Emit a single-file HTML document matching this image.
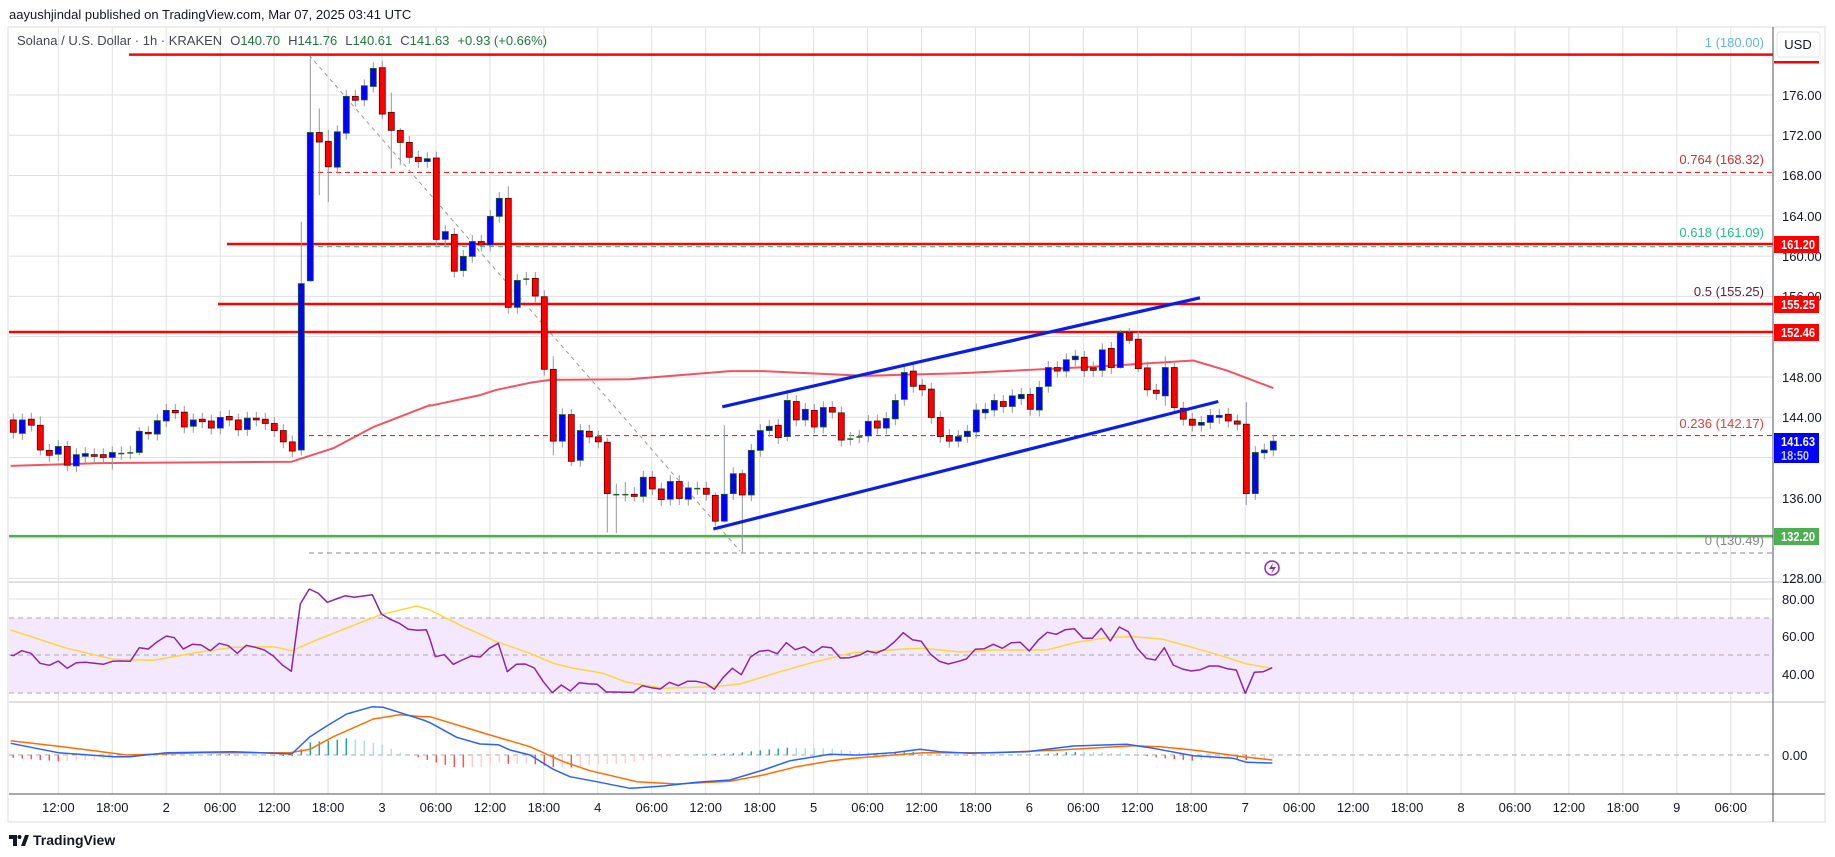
<!DOCTYPE html>
<html><head><meta charset="utf-8">
<style>
html,body{margin:0;padding:0;background:#fff;width:1835px;height:857px;overflow:hidden;font-family:"Liberation Sans",sans-serif;}
svg{position:absolute;left:0;top:0;}
text{font-family:"Liberation Sans",sans-serif;}
</style></head>
<body>
<svg id="s" width="1835" height="857" viewBox="0 0 1835 857" xmlns="http://www.w3.org/2000/svg">
<rect x="8" y="27" width="1817" height="795" fill="#fff" stroke="#e9e9ea" stroke-width="1.5"/>
<g id="grid"></g>
<rect x="9" y="618" width="1764" height="75" fill="#f3e8fd"/>
<g id="bg"></g>
<g id="cand"></g>
<g id="fg"></g>
<text x="9" y="19" font-size="13" fill="#131722">aayushjindal published on TradingView.com, Mar 07, 2025 03:41 UTC</text>
<text x="17" y="45" font-size="13" fill="#434651">Solana / U.S. Dollar · 1h · KRAKEN<tspan dx="8">O</tspan><tspan fill="#1e7b3c">140.70</tspan><tspan dx="8">H</tspan><tspan fill="#1e7b3c">141.76</tspan><tspan dx="8">L</tspan><tspan fill="#1e7b3c">140.61</tspan><tspan dx="8">C</tspan><tspan fill="#1e7b3c">141.63</tspan><tspan dx="8" fill="#1e7b3c">+0.93 (+0.66%)</tspan></text>
<g font-size="13" text-anchor="end">
<text x="1764" y="47" fill="#64b5dc">1 (180.00)</text>
<text x="1764" y="164" fill="#d32f2f">0.764 (168.32)</text>
<text x="1764" y="237" fill="#22c08e">0.618 (161.09)</text>
<text x="1764" y="296" fill="#5b2438">0.5 (155.25)</text>
<text x="1764" y="428" fill="#e0403c">0.236 (142.17)</text>
<text x="1764" y="545" fill="#888">0 (130.49)</text>
</g>
<g font-size="13" fill="#131722">
<text x="1782" y="100">176.00</text><text x="1782" y="140">172.00</text><text x="1782" y="180">168.00</text>
<text x="1782" y="221">164.00</text><text x="1782" y="261">160.00</text><text x="1782" y="301">156.00</text>
<text x="1782" y="382">148.00</text><text x="1782" y="422">144.00</text><text x="1782" y="503">136.00</text>
<text x="1782" y="583">128.00</text>
<text x="1782" y="604">80.00</text><text x="1782" y="641">60.00</text><text x="1782" y="679">40.00</text>
<text x="1782" y="760">0.00</text>
</g>
<rect x="1777" y="32" width="43" height="25" rx="3" fill="#fff" stroke="#e0e3eb"/>
<text x="1798" y="49" font-size="13" fill="#131722" text-anchor="middle">USD</text>
<rect x="1774" y="61" width="45" height="2.5" fill="#f00"/>
<g font-size="12.5" font-weight="bold" fill="#fff">
<rect x="1774" y="236" width="45" height="17" fill="#f00"/><text x="1781" y="249" textLength="34" lengthAdjust="spacingAndGlyphs">161.20</text>
<rect x="1774" y="296" width="45" height="17" fill="#f00"/><text x="1781" y="309" textLength="34" lengthAdjust="spacingAndGlyphs">155.25</text>
<rect x="1774" y="324" width="45" height="17" fill="#f00"/><text x="1781" y="337" textLength="34" lengthAdjust="spacingAndGlyphs">152.46</text>
<rect x="1774" y="433" width="45" height="30" fill="#0000ff"/><text x="1781" y="446" textLength="34" lengthAdjust="spacingAndGlyphs">141.63</text><text x="1781" y="460" fill="#c9c9ff" textLength="28" lengthAdjust="spacingAndGlyphs">18:50</text>
<rect x="1774" y="528" width="45" height="17" fill="#4caf50"/><text x="1781" y="541" textLength="34" lengthAdjust="spacingAndGlyphs">132.20</text>
</g>
<line x1="1773" y1="27" x2="1773" y2="822" stroke="#50535e" stroke-width="1"/>
<line x1="9" y1="794" x2="1825" y2="794" stroke="#50535e" stroke-width="1"/>
<g id="tl" font-size="13" fill="#131722" text-anchor="middle"></g>
<circle cx="1272" cy="568" r="7" fill="none" stroke="#9c27b0" stroke-width="1.5"/>
<path d="M1273 563 L1269 569 L1273 569 L1271 574 L1276 567 L1272 567 Z" fill="#9c27b0"/>
<g transform="translate(9,833)">
<path d="M0 2 H8 V13 H4 V6 H0 Z" fill="#131722"/>
<circle cx="10.5" cy="4" r="2" fill="#131722"/>
<path d="M12 13 L16 2 H20 L16 13 Z" fill="#131722"/>
</g>
<text x="33" y="845" font-size="14" font-weight="bold" fill="#131722">TradingView</text>
</svg>
<script>
var NS="http://www.w3.org/2000/svg";
function el(p,t,a){var e=document.createElementNS(NS,t);for(var k in a)e.setAttribute(k,a[k]);document.getElementById(p).appendChild(e);return e;}
function py(p){return 95+(176-p)*10.07;}
function zy(z){return 27+z/2.825;}
for(var k=0;k<32;k++){var x=58.3+53.95*k;if(x>1772)break;el('grid','line',{x1:x,y1:27,x2:x,y2:794,stroke:'#e0e0e0','stroke-width':1});}
for(var p=128;p<=176;p+=4){el('grid','line',{x1:9,y1:py(p),x2:1773,y2:py(p),stroke:'#e0e0e0'});}
[599,636,674].forEach(function(y){el('grid','line',{x1:9,y1:y,x2:1773,y2:y,stroke:'#e0e0e0'});});
el('grid','line',{x1:9,y1:582,x2:1825,y2:582,stroke:'#e0e0e0','stroke-width':2});
el('grid','line',{x1:9,y1:702,x2:1825,y2:702,stroke:'#e0e0e0','stroke-width':2});
[618,655,693].forEach(function(y){el('bg','line',{x1:9,y1:y,x2:1773,y2:y,stroke:'#aaa','stroke-dasharray':'5,4'});});
el('bg','line',{x1:9,y1:755,x2:1773,y2:755,stroke:'#aaa','stroke-dasharray':'5,4'});
el('bg','line',{x1:309,y1:55,x2:1773,y2:55,stroke:'#64b5dc','stroke-dasharray':'5,4'});
el('bg','line',{x1:309,y1:py(168.32),x2:1773,y2:py(168.32),stroke:'#f00','stroke-dasharray':'5,4'});
el('bg','line',{x1:309,y1:py(161.09)+1.5,x2:1773,y2:py(161.09)+1.5,stroke:'#22c08e','stroke-dasharray':'5,4'});
el('bg','line',{x1:309,y1:py(142.17),x2:1773,y2:py(142.17),stroke:'#f00','stroke-dasharray':'5,4'});
el('bg','line',{x1:309,y1:553,x2:1773,y2:553,stroke:'#888','stroke-dasharray':'5,4'});
el('bg','line',{x1:309,y1:55,x2:740,y2:551,stroke:'#999','stroke-dasharray':'4,4'});
function poly(id,pts,col,w,op){el(id,'polyline',{points:pts.map(function(q){return q[0].toFixed(1)+','+q[1].toFixed(1);}).join(' '),fill:'none',stroke:col,'stroke-width':w,'stroke-opacity':op||1,'stroke-linejoin':'round'});}
function cv(off,arr,f){return arr.map(function(a){return [off+a[0]/3,f(a[1])];});}
var ma=[].concat(cv(0,[[32,1240],[300,1232],[600,1230],[875,1228],[900,1220],[1000,1190],[1120,1130],[1290,1068]],zy),
cv(430,[[0,1070],[150,1040],[200,1025],[300,1005],[360,997],[600,995],[900,972],[1000,972],[1300,985]],zy),
cv(860,[[20,985],[300,978],[700,960],[1000,942],[1100,970],[1240,1020]],zy));
poly('bg',ma,'#f23645',2,0.85);
function hl(x1,y,c){el('bg','line',{x1:x1,y1:y,x2:1773,y2:y,stroke:c,'stroke-width':2.5});}
hl(129,54.6,'#f00');hl(227,py(161.2),'#f00');hl(218,py(155.25),'#f00');hl(9,py(152.46),'#f00');hl(9,py(132.2),'#4caf50');
var C="1110,1145,r;1110,1148,b;1108,1125,r;1125,1195,r;1196,1210,r;1185,1207,b;1185,1238,r;1208,1240,b;1205,1213,b;1208,1213,r;1208,1216,r;1202,1216,b;1203,1205,d;1201,1203,d;1142,1202,b;1145,1148,r;1112,1150,b;1083,1113,b;1083,1090,r;1088,1130,r;1110,1128,b;1108,1115,r;1113,1133,r;1103,1133,b;1100,1110,r;1110,1138,r;1105,1137,b;1105,1110,r;1108,1120,r;1120,1140,r;1140,1172,r;1172,1198,r;725,1195,b;298,717,b;298,325,r;323,395,r;296,396,b;196,300,b;196,207,r;166,206,b;117,168,b;115,246,r;241,292,r;292,326,r;326,368,r;368,380,r;372,380,b;370,600,r;578,600,b;586,690,r;648,688,b;606,648,b;606,616,r;535,616,b;484,535,b;484,792,r;716,792,b;710,712,d;710,760,r;762,967,r;967,1170,r;1095,1170,b;1095,1227,r;1140,1224,b;1142,1158,r;1158,1172,r;1173,1318,r;1319,1321,d;1319,1321,d;1320,1326,r;1272,1326,b;1272,1305,r;1305,1335,r;1284,1334,b;1284,1332,r;1302,1334,b;1302,1304,d;1303,1320,r;1323,1396,r;1320,1396,b;1262,1318,b;1262,1322,r;1196,1322,b;1140,1196,b;1128,1140,b;1125,1160,r;1055,1157,b;1058,1110,r;1080,1110,b;1083,1130,r;1075,1130,b;1075,1088,r;1090,1167,r;1162,1164,d;1156,1158,d;1114,1155,b;1113,1133,r;1106,1133,b;1055,1107,b;976,1052,b;972,1015,r;1012,1025,r;1023,1103,r;1103,1157,r;1154,1170,r;1157,1170,b;1142,1157,b;1082,1144,b;1080,1090,b;1055,1082,b;1058,1072,r;1042,1072,b;1038,1050,b;1038,1080,r;1018,1082,b;962,1015,b;962,972,r;940,972,b;930,940,b;933,970,r;963,970,r;912,970,b;908,962,r;863,962,b;863,885,r;882,965,r;963,1025,r;1026,1035,r;962,1042,b;962,1075,r;1077,1108,r;1108,1125,r;1117,1125,b;1097,1117,b;1097,1103,b;1094,1113,r;1113,1122,r;1122,1318,r;1202,1318,b;1195,1203,b;1170,1195,b".split(';');
var W={32:[550,1210],33:[80,720],34:[230,475],35:[290,495],41:[95,260],40:[100,185],42:[185,400],43:[285,390],66:[1160,1428],67:[1290,1430],68:[1285,1340],69:[1300,1340],78:[1315,1410],79:[1125,1400],81:[1250,1485],55:[450,810],60:[930,1210],62:[1080,1240],137:[1060,1350],86:[1025,1170],125:[860,975],124:[850,895],123:[855,965],128:[930,1070],14:[1130,1210],3:[1100,1210],6:[1170,1255],11:[1185,1250]};
C.forEach(function(s,i){var a=s.split(','),t=+a[0],b=+a[1],c=a[2],x=13.3+9*i;
 var w=W[i]||[t-18,b+18];
 el('cand','line',{x1:x,y1:zy(w[0]),x2:x,y2:zy(w[1]),stroke:'#9598a1','stroke-width':1});
 if(c=='d'){el('cand','rect',{x:x-3,y:zy(t),width:6,height:1.5,fill:'#1e5e2e'});return;}
 el('cand','rect',{x:x-3,y:zy(t),width:6,height:Math.max(1.5,zy(b)-zy(t)),fill:c=='b'?'#0000ff':'#ff0000',stroke:c=='b'?'#1b5e20':'#5a0000','stroke-width':0.8});
});
el('fg','line',{x1:722.3,y1:406.8,x2:1200,y2:297.8,stroke:'#0a1fe6','stroke-width':3.2});
el('fg','line',{x1:713.3,y1:529,x2:1218.3,y2:401.5,stroke:'#0a1fe6','stroke-width':3.2});
function ry(z){return 580+z/3;}
var rsi=[].concat(cv(0,[[32,225],[40,227],[65,212],[93,220],[120,250],[148,256],[175,243],[202,265],[229,248],[256,247],[283,250],[310,253],[337,244],[364,243],[391,244],[418,203],[445,207],[472,185],[499,168],[523,173],[550,207],[577,193],[604,195],[631,212],[658,190],[685,197],[712,220],[739,196],[766,202],[793,210],[820,228],[847,255],[874,274],[901,72],[928,27],[955,40],[982,67],[1009,57],[1036,47],[1063,52],[1090,48],[1117,44],[1144,102],[1171,118],[1198,130],[1225,148],[1252,151],[1279,149]],ry),
cv(430,[[0,178],[16,230],[43,224],[70,253],[97,240],[124,228],[151,231],[178,205],[205,190],[232,275],[259,253],[286,252],[313,264],[340,305],[367,338],[394,315],[421,333],[448,308],[475,311],[502,313],[529,336],[556,336],[583,337],[610,337],[637,317],[664,323],[691,327],[718,307],[745,317],[772,304],[799,304],[826,310],[853,328],[880,292],[907,265],[934,284],[961,232],[988,214],[1015,211],[1042,221],[1069,188],[1096,209],[1123,200],[1150,218],[1177,200],[1204,203],[1231,234],[1258,233]],ry),
cv(860,[[0,225],[22,213],[49,219],[76,208],[103,186],[130,158],[157,179],[184,184],[211,222],[238,244],[265,252],[292,245],[319,237],[346,208],[373,206],[400,193],[427,205],[454,188],[481,187],[508,213],[535,180],[562,157],[589,163],[616,149],[643,146],[670,175],[697,175],[724,145],[751,183],[778,141],[805,155],[832,205],[859,235],[886,240],[913,203],[940,255],[967,267],[994,273],[1021,269],[1048,258],[1075,258],[1102,266],[1129,270],[1156,340],[1183,277],[1210,275],[1237,263]],ry));
var rma=[].concat(cv(0,[[32,150],[200,205],[340,238],[460,241],[600,216],[700,202],[820,200],[875,212],[950,180],[1050,140],[1140,105],[1250,78]],ry),
cv(430,[[0,90],[100,140],[200,185],[300,220],[370,250],[430,265],[520,280],[590,307],[700,325],[850,320],[930,312],[1050,275],[1150,247],[1270,218]],ry),
cv(860,[[0,217],[130,207],[190,205],[300,216],[400,210],[500,210],[560,210],[650,187],[750,172],[820,170],[910,178],[1000,203],[1100,232],[1160,252],[1237,265]],ry));
poly('fg',rma,'#fdd835',1.5);
poly('fg',rsi,'#8e24aa',1.5);
var mb=[].concat(cv(0,[[32,490],[175,518],[340,530],[390,530],[500,518],[700,515],[875,522],[930,470],[980,438],[1040,402],[1117,380],[1150,382],[1270,420]],ry),
cv(430,[[0,428],[80,472],[150,492],[205,494],[240,510],[300,525],[370,568],[420,590],[500,605],[600,625],[700,618],[800,607],[900,600],[1000,570],[1080,542],[1200,523],[1270,525]],ry),
cv(860,[[0,525],[100,518],[180,508],[240,515],[330,520],[500,515],[640,498],[800,493],[880,505],[1000,527],[1120,535],[1160,547],[1237,549]],ry));
var mo=[].concat(cv(0,[[32,482],[200,502],[380,525],[600,518],[870,518],[930,508],[1000,470],[1120,417],[1200,404],[1270,410]],ry),
cv(430,[[0,410],[170,462],[300,500],[400,545],[480,572],[620,605],[740,612],[900,604],[1000,585],[1100,560],[1200,543],[1270,535]],ry),
cv(860,[[0,533],[190,518],[400,518],[600,510],[820,497],[900,500],[1000,510],[1150,530],[1237,540]],ry));
function interp(a,x){for(var i=1;i<a.length;i++){if(a[i][0]>=x){var t=(x-a[i-1][0])/(a[i][0]-a[i-1][0]||1);return a[i-1][1]+t*(a[i][1]-a[i-1][1]);}}return a[a.length-1][1];}
var prev=0;
for(var i=0;i<141;i++){var x=13.3+9*i;var h=interp(mo,x)-interp(mb,x);var c;
 if(h>=0)c=(h>=prev)?'#26a69a':'#b2dfdb';else c=(h<=prev)?'#ff5252':'#ffcdd2';prev=h;
 if(Math.abs(h)<0.4)continue;
 el('cand','line',{x1:x,y1:755,x2:x,y2:755-h,stroke:c,'stroke-width':1.5});}
poly('fg',mo,'#ff6d00',1.5);
poly('fg',mb,'#2962ff',1.5);
var L=["12:00","18:00","2","06:00","12:00","18:00","3","06:00","12:00","18:00","4","06:00","12:00","18:00","5","06:00","12:00","18:00","6","06:00","12:00","18:00","7","06:00","12:00","18:00","8","06:00","12:00","18:00","9","06:00"];
var tl=document.getElementById('tl');
L.forEach(function(s,k){var t=document.createElementNS(NS,'text');t.setAttribute('x',58.3+53.95*k);t.setAttribute('y',812);t.textContent=s;tl.appendChild(t);});
</script>
</body></html>
